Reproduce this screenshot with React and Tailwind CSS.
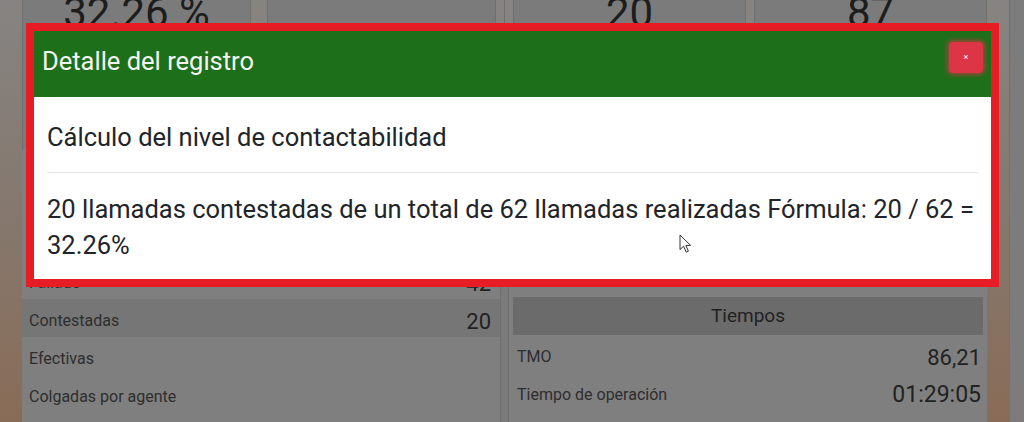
import React from 'react';

const topCards = [
  { value: '32.26 %', w: 'w-[229px]' },
  { value: '', w: 'w-[229px]' },
  { value: '20', w: 'w-[233px]' },
  { value: '87', w: 'w-[233px]' },
];

const leftRows = [
  { label: 'Fallado', value: '42' },
  { label: 'Contestadas', value: '20', dark: true },
  { label: 'Efectivas', value: '' },
  { label: 'Colgadas por agente', value: '' },
];

function Row({ label, value, dark, big, pl = 'pl-[7px]', pr = 'pr-[8px]' }) {
  return (
    <div className={`flex items-center justify-between ${pl} ${pr} h-[38px] pt-[6px] ${dark ? 'bg-[#767676]' : ''}`}>
      <span className="text-[16px] text-[#2e2e2e]">{label}</span>
      <span className={`${big ? 'text-[23px]' : 'text-[22px]'} text-[#222]`}>{value}</span>
    </div>
  );
}

function Cursor() {
  return (
    <svg className="absolute left-[679px] top-[234px]" width="13" height="20" viewBox="0 0 13 20">
      <path d="M1 1 L1 15.5 L4.6 12.2 L7.2 18.2 L9.4 17.2 L6.9 11.4 L11.6 11.4 Z" fill="#fff" stroke="#333" strokeWidth="1" strokeLinejoin="round" />
    </svg>
  );
}

export default function App() {
  return (
    <div className="relative w-[1024px] h-[422px] overflow-hidden bg-gradient-to-b from-[#868482] via-[#85786e] to-[#896c57]" style={{ fontFamily: 'Roboto, "Noto Sans", sans-serif' }}>
      {/* dimmed dashboard underneath */}
      <div className="flex h-full">
        <div className="w-[22px] shrink-0" />
        <div className="flex flex-col w-[965px] shrink-0">
          {/* top indicator cards */}
          <div className="flex h-[150px] gap-[8px]">
            <div className="flex w-[478px] gap-[16px]">
              {topCards.slice(0, 2).map((c, i) => (
                <div key={i} className={`${c.w} bg-[#7b7b7b] border-x border-[#6f6f6f] flex justify-center`}>
                  <span className="text-[42px] leading-none mt-[-8px] text-[#1d1d1d]">{c.value}</span>
                </div>
              ))}
            </div>
            <div className="w-px bg-[#6e6e6e]" />
            <div className="flex flex-1 gap-[8px]">
              {topCards.slice(2).map((c, i) => (
                <div key={i} className={`${c.w} bg-[#7b7b7b] border-x border-[#6f6f6f] flex justify-center`}>
                  <span className="text-[42px] leading-none mt-[-8px] text-[#1d1d1d]">{c.value}</span>
                </div>
              ))}
            </div>
          </div>
          {/* detail panels */}
          <div className="flex flex-1">
            <div className="w-[478px] bg-[#7f7f7f] pt-[111px]">
              {leftRows.map((r) => (
                <Row key={r.label} {...r} pr="pr-[9px]" />
              ))}
            </div>
            <div className="w-[9px] bg-[#7b7b7b] border-x border-[#6e6e6e]" />
            <div className="flex-1 bg-[#7f7f7f] pt-[114px] px-[4px]">
              <div className="flex items-center px-[5px] h-[33px] text-[16px] text-[#2e2e2e]">Nivel de efectividad</div>
              <div className="h-[38px] bg-[#6b6b6b] flex items-center justify-center text-[19px] text-[#222]">Tiempos</div>
              <Row label="TMO" value="86,21" pl="pl-[4px]" pr="pr-[2px]" />
              <Row label="Tiempo de operación" value="01:29:05" big pl="pl-[4px]" pr="pr-[2px]" />
            </div>
          </div>
        </div>
        <div className="w-[22px] shrink-0" />
        <div className="flex-1 bg-[#7c7c7c] border-l border-[#727272]" />
      </div>

      {/* modal */}
      <div className="absolute left-[26px] top-[23px] w-[973px] h-[264px] border-8 border-[#e71d25] bg-white flex flex-col">
        <div className="h-[66px] bg-[#1e6f1a] flex items-start justify-between pl-[8px] pr-[8px]">
          <span className="mt-[15px] text-[25.5px] leading-[30px] text-[#f4f4f4]">Detalle del registro</span>
          <button className="mt-[11px] w-[34px] h-[31px] rounded-[4px] bg-[#dc3545] shadow-[0_0_4px_2px_rgba(220,53,69,0.7)] flex items-center justify-center text-[9px] leading-none text-white">
            ×
          </button>
        </div>
        <div className="flex-1 px-[13px] text-[#212529]">
          <div className="pt-[25px] pb-[20px] text-[25.5px] leading-[30px]">Cálculo del nivel de contactabilidad</div>
          <div className="h-px bg-[#e6e6e6]" />
          <p className="pt-[18px] text-[25.5px] leading-[36px]">
            20 llamadas contestadas de un total de 62 llamadas realizadas Fórmula: 20 / 62 = 32.26%
          </p>
        </div>
      </div>
      <Cursor />
    </div>
  );
}
